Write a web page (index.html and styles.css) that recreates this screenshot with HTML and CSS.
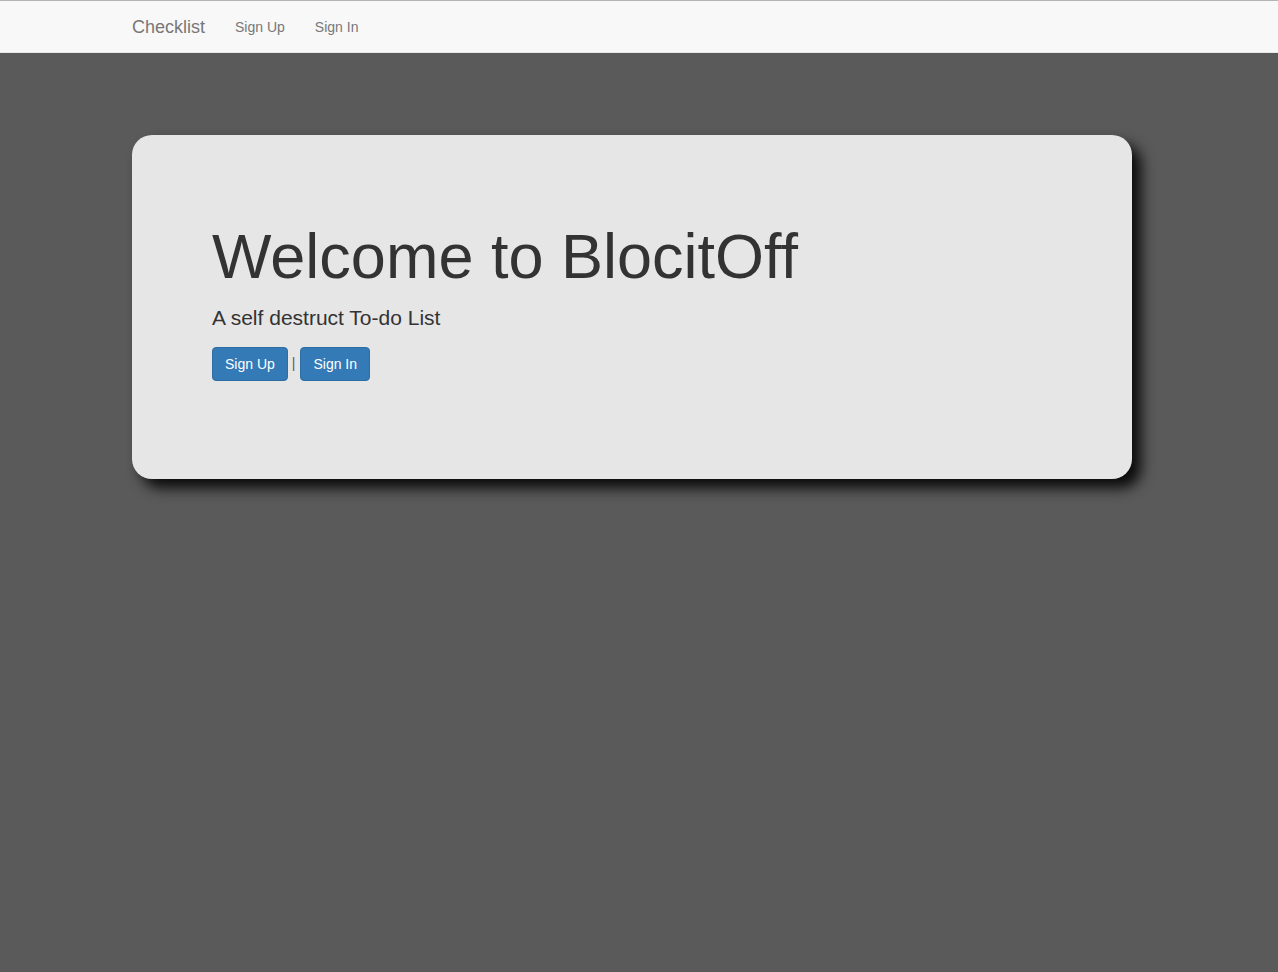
FILE: index.html
```html
<!DOCTYPE html>
<html>
<head>
<meta charset="utf-8">
<title>BlocitOff</title>
<link rel="stylesheet" href="styles.css">
</head>
<body>
<nav class="navbar">
  <div class="nav-inner">
    <a class="brand" href="#">Checklist</a>
    <a class="nav-link" href="#">Sign Up</a>
    <a class="nav-link" href="#">Sign In</a>
  </div>
</nav>
<main class="jumbotron">
  <h1 class="title">Welcome to BlocitOff</h1>
  <p class="lead">A self destruct To-do List</p>
  <div class="actions">
    <a class="btn" href="#">Sign Up</a>
    <span class="sep">|</span>
    <a class="btn" href="#">Sign In</a>
  </div>
</main>
</body>
</html>
```
FILE: styles.css
```css
html, body {
  margin: 0;
  padding: 0;
}
body {
  background: #5a5a5a;
  font-family: "Liberation Sans", Arial, Helvetica, sans-serif;
  font-size: 14px;
  line-height: 1.42857;
  color: #333;
  min-height: 972px;
}
.navbar {
  background: #f8f8f8;
  border-top: 1px solid #b4b4b4;
  border-bottom: 1px solid #e7e7e7;
  height: 51px;
}
.nav-inner {
  margin-left: 117px;
  display: flex;
  align-items: stretch;
  height: 51px;
}
.brand {
  font-size: 18px;
  line-height: 20px;
  padding: 16px 15px 15px;
  color: #777;
  text-decoration: none;
}
.nav-link {
  font-size: 14px;
  line-height: 20px;
  padding: 16px 15px 15px;
  color: #777;
  text-decoration: none;
}
.jumbotron {
  box-sizing: border-box;
  margin: 82px 0 0 132px;
  width: 1000px;
  height: 344px;
  background: #e6e6e6;
  border-radius: 20px;
  padding: 87px 80px 0;
  box-shadow: 9px 9px 14px rgba(0, 0, 0, 0.9);
}
.title {
  margin: 0 0 12px;
  font-size: 63px;
  font-weight: normal;
  line-height: 1.1;
  color: #333;
}
.lead {
  margin: 0 0 14px;
  font-size: 21px;
  line-height: 1.4;
  color: #333;
}
.actions {
  display: flex;
  align-items: center;
  gap: 4px;
}
.btn {
  display: inline-block;
  box-sizing: border-box;
  height: 34px;
  padding: 6px 12px;
  font-size: 14px;
  line-height: 20px;
  color: #fff;
  background: #337ab7;
  border: 1px solid #2e6da4;
  border-radius: 4px;
  text-decoration: none;
}
.sep {
  color: #6b5a45;
  font-size: 14px;
  padding-right: 1px;
}
```
